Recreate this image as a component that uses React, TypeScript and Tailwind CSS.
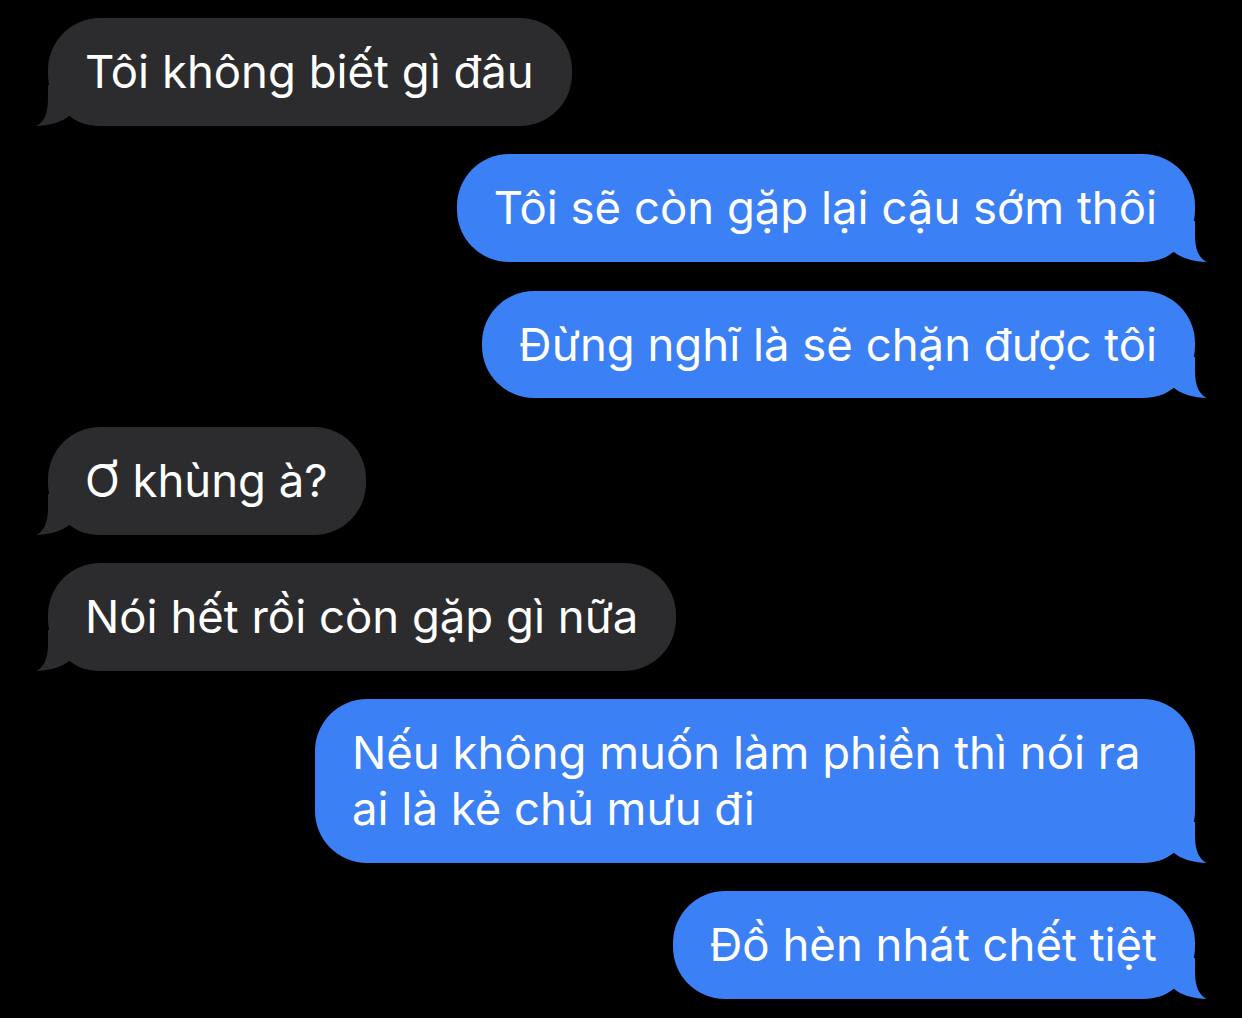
const messages: { text: string; me: boolean }[] = [
  { text: "Tôi không biết gì đâu", me: false },
  { text: "Tôi sẽ còn gặp lại cậu sớm thôi", me: true },
  { text: "Đừng nghĩ là sẽ chặn được tôi", me: true },
  { text: "Ơ khùng à?", me: false },
  { text: "Nói hết rồi còn gặp gì nữa", me: false },
  { text: "Nếu không muốn làm phiền thì nói ra ai là kẻ chủ mưu đi", me: true },
  { text: "Đồ hèn nhát chết tiệt", me: true },
];

function Tail({ me }: { me: boolean }) {
  // tail sits on the bottom corner; drawn for the left side, mirrored for the right
  return (
    <svg
      width="62"
      height="42"
      viewBox="0 0 62 42"
      className={
        me
          ? "absolute -right-[12px] -bottom-[1px] -scale-x-100"
          : "absolute -left-[12px] -bottom-[1px]"
      }
    >
      <path
        d="M12 0 L12 14 C12 30 7 38 0 41 C12 41 27 37 34 30 C39 36 46 40 62 40 L62 0 Z"
        fill={me ? "#3b80f5" : "#2c2c2e"}
      />
    </svg>
  );
}

export default function App() {
  return (
    <div
      className="flex min-h-screen flex-col gap-[28.5px] bg-black pl-[48px] pr-[47px] pt-[18px] text-white"
      style={{ fontFamily: "Inter, 'Noto Sans', sans-serif" }}
    >
      {messages.map((m, i) => (
        <div
          key={i}
          className={
            "relative max-w-[880px] rounded-[52px] pl-[37px] pr-[38px] py-[26px] text-[45.5px] leading-[55.75px] " +
            (m.me ? "self-end bg-[#3b80f5]" : "self-start bg-[#2c2c2e]")
          }
        >
          <Tail me={m.me} />
          <div className="relative">{m.text}</div>
        </div>
      ))}
    </div>
  );
}
